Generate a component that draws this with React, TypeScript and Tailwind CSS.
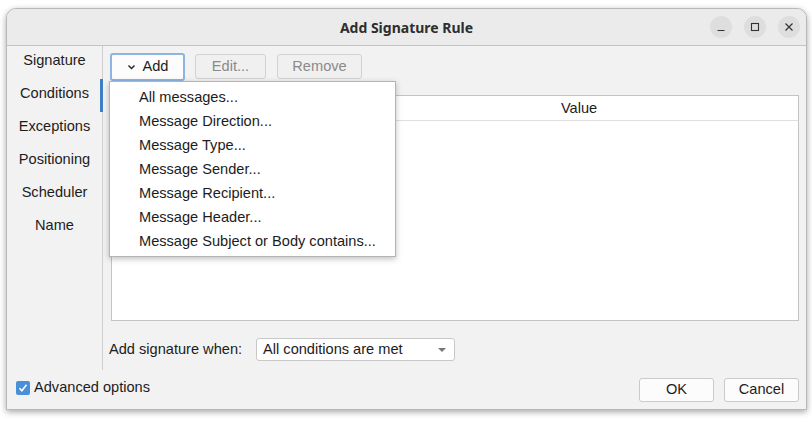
import React from 'react';

const tabs = ['Signature', 'Conditions', 'Exceptions', 'Positioning', 'Scheduler', 'Name'];

const menuItems = [
  'All messages...',
  'Message Direction...',
  'Message Type...',
  'Message Sender...',
  'Message Recipient...',
  'Message Header...',
  'Message Subject or Body contains...',
];

const WindowButton = ({ children }: { children: React.ReactNode }) => (
  <div className="w-[22px] h-[22px] rounded-full bg-[#dedede] flex items-center justify-center">
    {children}
  </div>
);

const App: React.FC = () => {
  return (
    <div className="w-[812px] h-[422px] bg-white pl-[6px] pt-[8px] overflow-hidden font-['Liberation_Sans',Arial,sans-serif] text-[14.6px] text-[#1c1c1c]">
      <div className="w-[801px] h-[402px] rounded-t-[10px] border border-[#b8b8b8] bg-[#f2f2f2] shadow-[0_2px_6px_rgba(0,0,0,0.35)] flex flex-col overflow-hidden">
        {/* title bar */}
        <div className="h-[37px] shrink-0 bg-[#ebebeb] border-b border-[#c4c4c4] flex items-center relative">
          <div className="flex-1 text-center font-['Noto_Sans',sans-serif] font-bold text-[14px] text-[#2e2e2e] pt-[1px]">
            Add Signature Rule
          </div>
          <div className="absolute right-[6px] top-[7px] flex gap-[12px]">
            <WindowButton>
              <svg width="10" height="10" viewBox="0 0 10 10">
                <path d="M1.5 8.5h7" stroke="#333" strokeWidth="1.2" />
              </svg>
            </WindowButton>
            <WindowButton>
              <svg width="10" height="10" viewBox="0 0 10 10">
                <rect x="1.5" y="1.5" width="7" height="7" fill="none" stroke="#333" strokeWidth="1.1" />
              </svg>
            </WindowButton>
            <WindowButton>
              <svg width="10" height="10" viewBox="0 0 10 10">
                <path d="M1.5 1.5l7 7M8.5 1.5l-7 7" stroke="#333" strokeWidth="1.2" />
              </svg>
            </WindowButton>
          </div>
        </div>

        {/* main */}
        <div className="h-[324px] shrink-0 flex">
          <div className="w-[96px] shrink-0 border-r border-[#cfcfcf] flex flex-col">
            {tabs.map((t) => (
              <div key={t} className="h-[33px] pt-[4px] leading-[20px] text-center relative">
                {t}
                {t === 'Conditions' && (
                  <div className="absolute right-[-1px] top-0 w-[3px] h-[33px] bg-[#3d7ec4]" />
                )}
              </div>
            ))}
          </div>

          <div className="flex-1 relative pl-[8px] pr-[7px] pt-[8px] flex flex-col">
            {/* toolbar */}
            <div className="flex gap-[10px] h-[25px] items-center">
              <div className="w-[75px] h-[28px] -ml-[1px] rounded-[3px] border-2 border-[#8db4e2] bg-[#fcfcfc] flex items-center justify-center gap-[7px]">
                <svg width="9" height="6" viewBox="0 0 9 6">
                  <path d="M1.5 1.5l3 3 3-3" fill="none" stroke="#222" strokeWidth="1.4" />
                </svg>
                <span>Add</span>
              </div>
              <div className="w-[71px] h-[25px] rounded-[3px] border border-[#d2d2d2] bg-[#f0f0f0] text-[#8a8a8a] flex items-center justify-center">
                Edit...
              </div>
              <div className="w-[85px] h-[25px] rounded-[3px] border border-[#d2d2d2] bg-[#f0f0f0] text-[#8a8a8a] flex items-center justify-center ml-[1px]">
                Remove
              </div>
            </div>

            {/* table */}
            <div className="mt-[16px] h-[226px] bg-white border border-[#c4c4c4] flex flex-col">
              <div className="h-[25px] pt-[1px] border-b border-[#e0e0e0] flex">
                <div className="w-[248px] border-r border-[#e0e0e0]" />
                <div className="flex-1 flex items-center justify-center">Value</div>
              </div>
            </div>

            {/* combo row */}
            <div className="mt-[17px] flex items-center">
              <span className="-ml-[2px]">Add signature when:</span>
              <div className="ml-[14px] w-[199px] h-[23px] rounded-[3px] border border-[#c8c8c8] bg-white flex items-center pl-[6px] pr-[7px]">
                <span className="flex-1">All conditions are met</span>
                <svg width="10" height="6" viewBox="0 0 10 6">
                  <path d="M1 1h8l-4 4z" fill="#777" />
                </svg>
              </div>
            </div>

            {/* dropdown menu */}
            <div className="absolute left-[6px] top-[35px] w-[287px] bg-white border border-[#b4b4b4] shadow-[0_2px_6px_rgba(0,0,0,0.25)] py-[3px]">
              {menuItems.map((m) => (
                <div key={m} className="h-[24px] leading-[24px] pl-[29px]">
                  {m}
                </div>
              ))}
            </div>
          </div>
        </div>

        {/* bottom row */}
        <div className="flex-1 flex items-start pt-[7px] pl-[9px] pr-[7px]">
          <div className="flex items-center">
            <div className="w-[14px] h-[14px] rounded-[2px] bg-[#4a90d9] flex items-center justify-center">
              <svg width="10" height="10" viewBox="0 0 10 10">
                <path d="M1.5 5.2l2.4 2.6 4.6-6" fill="none" stroke="white" strokeWidth="1.6" />
              </svg>
            </div>
            <span className="ml-[4px]">Advanced options</span>
          </div>
          <div className="ml-auto flex gap-[10px] mt-[1px]">
            <div className="w-[75px] h-[24px] rounded-[3px] border border-[#cacaca] bg-[#fcfcfc] flex items-center justify-center">OK</div>
            <div className="w-[75px] h-[24px] rounded-[3px] border border-[#cacaca] bg-[#fcfcfc] flex items-center justify-center">Cancel</div>
          </div>
        </div>
      </div>
    </div>
  );
};

export default App;
